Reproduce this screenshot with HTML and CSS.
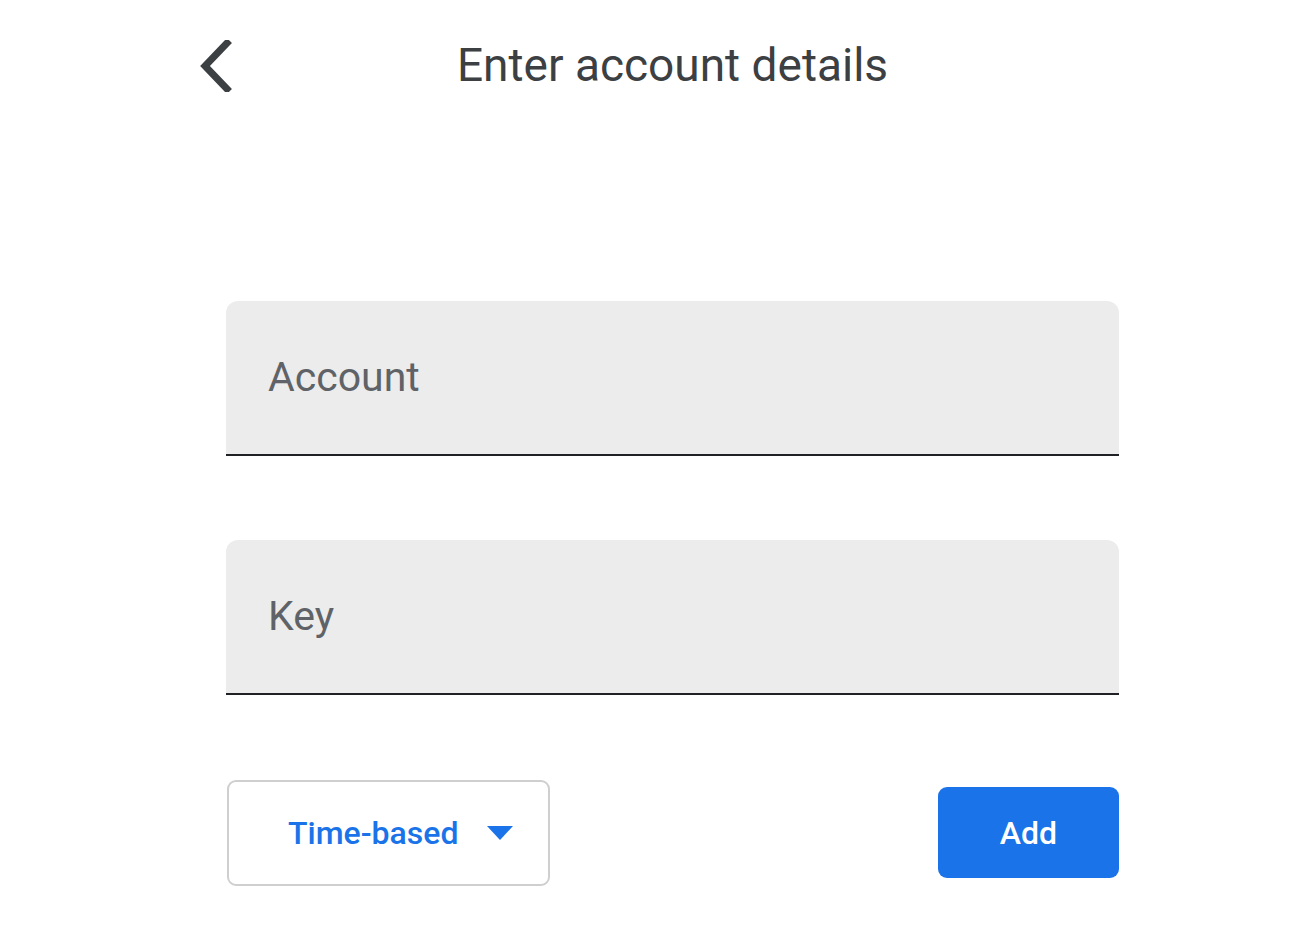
FILE: index.html
```html
<!DOCTYPE html>
<html>
<head>
<meta charset="utf-8">
<link rel="stylesheet" href="styles.css">
</head>
<body>
<div class="page">
  <header class="header">
    <button class="back" aria-label="Back">
      <svg width="34" height="52" viewBox="0 0 34 52"><path d="M29 3 L7 26 L29 49" fill="none" stroke="#3c4043" stroke-width="7" stroke-linecap="square"/></svg>
    </button>
    <h1 class="title">Enter account details</h1>
  </header>
  <div class="field field-account"><span class="label">Account</span></div>
  <div class="field field-key"><span class="label">Key</span></div>
  <div class="actions">
    <div class="select">
      <span class="select-text">Time-based</span>
      <svg class="caret" width="26" height="14" viewBox="0 0 26 14"><path d="M0 0 H26 L13 14 Z" fill="#1a73e8"/></svg>
    </div>
    <button class="add">Add</button>
  </div>
</div>
</body>
</html>
```
FILE: styles.css
```css
html, body {
  margin: 0;
  padding: 0;
  background: #ffffff;
}
body {
  font-family: Roboto, "Liberation Sans", Arial, sans-serif;
}
.page {
  width: 893px;
  margin-left: 226px;
  display: flex;
  flex-direction: column;
}
.header {
  position: relative;
  height: 130px;
  display: flex;
  align-items: flex-start;
  justify-content: center;
}
.back {
  position: absolute;
  left: -28px;
  top: 40px;
  width: 34px;
  height: 52px;
  padding: 0;
  border: 0;
  background: none;
}
.back svg { display: block; }
.title {
  margin: 37px 0 0 0;
  font-weight: 400;
  font-size: 46px;
  line-height: 56px;
  color: #3c4043;
  letter-spacing: 0;
}
.field {
  height: 153px;
  background: #ececec;
  border-radius: 12px 12px 0 0;
  border-bottom: 2px solid #202124;
  display: flex;
  align-items: center;
  padding-left: 42px;
  box-sizing: content-box;
}
.field-account { margin-top: 171px; }
.field-key { margin-top: 84px; }
.label {
  font-size: 41px;
  color: #5f6368;
  line-height: 1;
}
.actions {
  margin-top: 85px;
  display: flex;
  justify-content: space-between;
  align-items: center;
}
.select {
  width: 323px;
  height: 106px;
  margin-left: 1px;
  border: 2px solid #cfcfcf;
  border-radius: 9px;
  display: flex;
  align-items: center;
  padding-left: 59px;
  box-sizing: border-box;
  gap: 29px;
}
.select-text {
  font-size: 32px;
  color: #1a73e8;
  font-weight: 500;
}
.caret { display: block; }
.add {
  width: 181px;
  height: 91px;
  margin-top: -1px;
  border: 0;
  border-radius: 9px;
  background: #1a73e8;
  color: #ffffff;
  font-family: Roboto, "Liberation Sans", Arial, sans-serif;
  font-size: 32px;
  font-weight: 500;
}
```
